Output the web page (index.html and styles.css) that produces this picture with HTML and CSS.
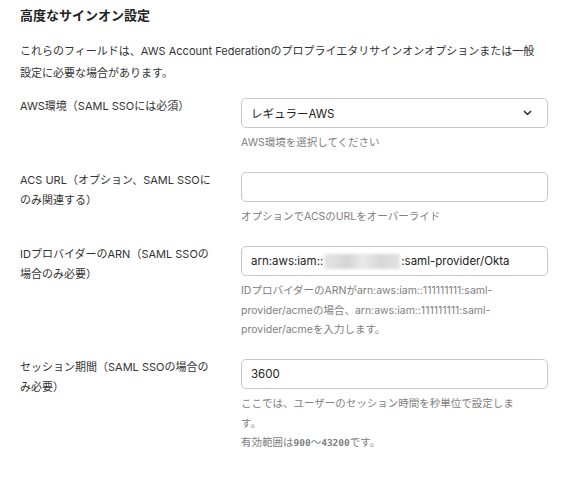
FILE: index.html
```html
<!DOCTYPE html>
<html lang="ja">
<head>
<meta charset="utf-8">
<title>高度なサインオン設定</title>
<link rel="stylesheet" href="styles.css">
</head>
<body>
<section class="panel">
  <h2 class="title">高度なサインオン設定</h2>
  <p class="desc">これらのフィールドは、AWS Account Federationのプロプライエタリサインオンオプションまたは一般設定に必要な場合があります。</p>

  <div class="row">
    <label class="label">AWS環境（SAML SSOには必須）</label>
    <div class="field">
      <div class="control select">
        <span>レギュラーAWS</span>
        <svg class="chev" width="10" height="6" viewBox="0 0 10 6"><path d="M1.5 1.2 L5 4.6 L8.5 1.2" fill="none" stroke="#333" stroke-width="1.6" stroke-linecap="round" stroke-linejoin="round"/></svg>
      </div>
      <p class="help">AWS環境を選択してください</p>
    </div>
  </div>

  <div class="row">
    <label class="label">ACS URL（オプション、SAML SSOにのみ関連する）</label>
    <div class="field">
      <div class="control"></div>
      <p class="help">オプションでACSのURLをオーバーライド</p>
    </div>
  </div>

  <div class="row">
    <label class="label">IDプロバイダーのARN（SAML SSOの場合のみ必要）</label>
    <div class="field">
      <div class="control"><span>arn:aws:iam::</span><span class="blur"></span><span>:saml-provider/Okta</span></div>
      <p class="help">IDプロバイダーのARNがarn:aws:iam::111111111:saml-provider/acmeの場合、arn:aws:iam::111111111:saml-provider/acmeを入力します。</p>
    </div>
  </div>

  <div class="row">
    <label class="label">セッション期間（SAML SSOの場合のみ必要）</label>
    <div class="field">
      <div class="control"><span>3600</span></div>
      <p class="help">ここでは、ユーザーのセッション時間を秒単位で設定します。</p>
      <p class="help">有効範囲は<code>900</code>〜<code>43200</code>です。</p>
    </div>
  </div>
</section>
</body>
</html>
```

FILE: styles.css
```css
* { box-sizing: border-box; }
html, body { margin: 0; padding: 0; background: #fff; }
body {
  font-family: "Inter", "Noto Sans CJK JP", sans-serif;
  color: #333;
}
.panel {
  padding: 5px 21px 0 20px;
}
.title {
  margin: 0;
  font-size: 13px;
  font-weight: 700;
  line-height: 20px;
  color: #222;
}
.desc {
  margin: 15px 0 0;
  max-width: 518px;
  font-size: 11px;
  line-height: 22px;
  color: #333;
}
.row {
  display: grid;
  grid-template-columns: 221px 1fr;
  margin-top: 14px;
}
.row + .row { margin-top: 19.5px; }
.label {
  font-size: 11px;
  line-height: 20px;
  margin-top: -2px;
  padding-right: 24px;
  color: #333;
}
.control {
  height: 30px;
  border: 1px solid #c9c9c9;
  border-radius: 5px;
  display: flex;
  align-items: center;
  padding: 0 9px;
  font-size: 11.5px;
  color: #222;
}
.select { justify-content: space-between; }
.chev { margin-right: 6px; width: 9px; }
.blur {
  display: inline-block;
  width: 76px;
  height: 15px;
  margin: 0 1px;
  background: linear-gradient(90deg, #e6e6e6, #d4d4d4 30%, #e9e9e9 50%, #d6d6d6 75%, #e2e2e2);
  filter: blur(1.5px);
}
.help {
  margin: 5px 0 0;
  max-width: 276px;
  font-size: 10.5px;
  line-height: 19.5px;
  color: #808080;
}
.help + .help { margin-top: 0; }
code {
  font-family: "DejaVu Sans Mono", monospace;
  font-size: 9.5px;
  font-weight: 700;
}
```
